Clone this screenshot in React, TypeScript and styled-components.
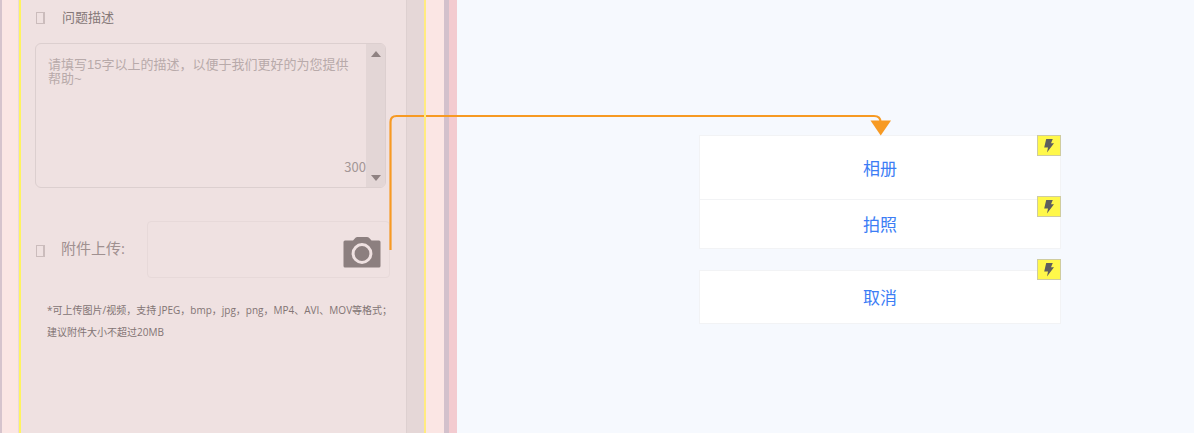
import React from "react";
import styled, { createGlobalStyle } from "styled-components";

const GlobalStyle = createGlobalStyle`
  *, *::before, *::after { box-sizing: border-box; }
  body {
    margin: 0;
    background: #f6f9fe;
    font-family: "Open Sans", "Noto Sans CJK SC", sans-serif;
  }
`;

const Page = styled.main`
  position: relative;
  display: flex;
  min-height: 100vh;
  overflow: hidden;
`;

const Backdrop = styled.section`
  flex: 0 0 457px;
  display: flex;
  border-right: 8px solid #f3cbd0;
`;

const Device = styled.div`
  flex: 1;
  display: flex;
  background: #fbe6e4;
  border-left: 2px solid #d6c4cd;
  border-right: 5px solid #d3c1cc;
  padding-left: 16px;
`;

const Screen = styled.div`
  flex: 0 0 408px;
  display: flex;
  background: #efe1e1;
  border-left: 1px solid #eadada;
`;

const Edge = styled.div<{ $color: string }>`
  position: relative;
  z-index: 2;
  flex: 0 0 2px;
  background: ${(p) => p.$color};
`;

const Form = styled.form`
  flex: 1;
  min-width: 0;
  display: flex;
  flex-direction: column;
  padding: 7px 14px 0;
`;

const PageScroll = styled.div`
  flex: 0 0 18px;
  background: #e5d7d7;
  border-left: 1px solid #ddd0d0;
`;

const TitleRow = styled.div`
  display: flex;
  align-items: center;
  height: 20px;
  gap: 17px;
  padding-left: 1px;
`;

const Missing = styled.span`
  width: 9px;
  height: 12px;
  margin-top: 2px;
  border: 1px solid #cbbcbc;
  border-width: 1px 2px 1px 1px;
`;

const Title = styled.label`
  font-size: 13px;
  line-height: 20px;
  color: #857878;
`;

const TextBox = styled.div`
  display: flex;
  width: 351px;
  height: 145px;
  margin-top: 16px;
  border: 1px solid #dccfcf;
  border-radius: 6px;
  overflow: hidden;
`;

const TextColumn = styled.div`
  flex: 1;
  display: flex;
  flex-direction: column;
  padding: 14px 0 10px 12px;
`;

const TextArea = styled.textarea`
  flex: 1;
  width: 100%;
  padding: 0 12px 0 0;
  border: 0;
  outline: 0;
  resize: none;
  overflow: hidden;
  background: transparent;
  color: #857878;
  font: 13px/14px "Liberation Sans", "Noto Sans CJK SC", sans-serif;
  &::placeholder { color: #b8aaaa; opacity: 1; }
`;

const Counter = styled.output`
  align-self: flex-end;
  font: 13px/20px "Noto Sans CJK SC", sans-serif;
  color: #a39696;
`;

const BoxScroll = styled.div`
  flex: 0 0 19px;
  display: flex;
  flex-direction: column;
  justify-content: space-between;
  align-items: center;
  padding: 7px 0 6px;
  background: #e3d6d6;
`;

const UploadRow = styled.div`
  display: flex;
  align-items: center;
  gap: 16px;
  height: 57px;
  margin-top: 33px;
  padding-left: 1px;
`;

const UploadLabel = styled.span`
  width: 70px;
  padding-bottom: 3px;
  font-size: 15px;
  line-height: 22px;
  color: #a09090;
`;

const UploadField = styled.div`
  flex: 0 0 243px;
  display: flex;
  align-items: center;
  justify-content: flex-end;
  height: 57px;
  padding-right: 8px;
  border: 1px solid #e7d9d9;
  border-radius: 4px;
`;

const CameraButton = styled.button`
  display: flex;
  padding: 6px 0 0;
  border: 0;
  background: none;
  cursor: pointer;
`;

const Hint = styled.p`
  margin: 21px 0 0 12px;
  font-size: 10px;
  line-height: 22px;
  color: #827474;
  white-space: nowrap;
`;

const Canvas = styled.section`
  flex: 1;
  padding: 135px 16px 0 242px;
`;

const Sheet = styled.div`
  display: flex;
  flex-direction: column;
  max-width: 362px;
`;

const Item = styled.div<{ $gap?: number }>`
  position: relative;
  display: flex;
  margin-top: ${(p) => p.$gap ?? 0}px;
`;

const Action = styled.button<{ $height: number }>`
  flex: 1;
  height: ${(p) => p.$height}px;
  padding: 2px 0 0;
  border: 1px solid #f2f3f5;
  background: #fff;
  color: #3c7df5;
  font: 17px/24px "Open Sans", "Noto Sans CJK SC", sans-serif;
  cursor: pointer;
`;

const Badge = styled.span<{ $top: number }>`
  position: absolute;
  top: ${(p) => p.$top}px;
  right: 0;
  display: flex;
  align-items: center;
  justify-content: center;
  width: 24px;
  height: 21px;
  border: 1px solid #cfcca0;
  background: #fff84a;
`;

const Connector = styled.svg`
  position: absolute;
  top: 0;
  left: 0;
  z-index: 1;
  pointer-events: none;
`;

const Arrow = ({ down = false }: { down?: boolean }) => (
  <svg width="10" height="6" viewBox="0 0 10 6" aria-hidden="true">
    <path d={down ? "M0 0h10L5 6z" : "M0 6h10L5 0z"} fill="#8f8282" />
  </svg>
);

const Camera = () => (
  <svg width="38" height="31" viewBox="0 0 38 31" aria-hidden="true">
    <path
      d="M2 3.500H10L12.500 .8Q13.200 0 14.500 0H24Q25.300 0 26 .8L28.500 3.500H36Q37.500 3.500 37.500 5V29Q37.500 30.500 36 30.500H2Q.5 30.500 .5 29V5Q.5 3.500 2 3.500z"
      fill="#8c7f7f"
    />
    <circle cx="19" cy="16.500" r="8.900" fill="none" stroke="#efe1e1" strokeWidth="3" />
  </svg>
);

const Bolt = () => (
  <svg width="10" height="14" viewBox="0 0 10 14" aria-hidden="true">
    <path d="M2.200 0H8.800L7 4.300H10L3 13.500L4 8.500H.2z" fill="#5e5e5e" />
  </svg>
);

const actions = [
  { label: "相册", height: 65, gap: 0, badge: 0 },
  { label: "拍照", height: 50, gap: -1, badge: -3 },
  { label: "取消", height: 54, gap: 21, badge: -11 },
];

export default function App() {
  return (
    <>
      <GlobalStyle />
      <Page>
        <Backdrop>
          <Device>
            <Screen>
              <Edge $color="#fff45f" />
              <Form>
                <TitleRow>
                  <Missing />
                  <Title htmlFor="description">问题描述</Title>
                </TitleRow>
                <TextBox>
                  <TextColumn>
                    <TextArea
                      id="description"
                      placeholder="请填写15字以上的描述，以便于我们更好的为您提供帮助~"
                    />
                    <Counter htmlFor="description">300</Counter>
                  </TextColumn>
                  <BoxScroll>
                    <Arrow />
                    <Arrow down />
                  </BoxScroll>
                </TextBox>
                <UploadRow>
                  <Missing />
                  <UploadLabel id="upload-label">附件上传:</UploadLabel>
                  <UploadField>
                    <CameraButton type="button" aria-labelledby="upload-label">
                      <Camera />
                    </CameraButton>
                  </UploadField>
                </UploadRow>
                <Hint>
                  *可上传图片/视频，支持 JPEG，bmp，jpg，png，MP4、AVI、MOV等格式；
                  <br />
                  建议附件大小不超过20MB
                </Hint>
              </Form>
              <PageScroll />
              <Edge $color="#ffeb80" />
            </Screen>
          </Device>
        </Backdrop>
        <Canvas>
          <Sheet>
            {actions.map((a) => (
              <Item key={a.label} $gap={a.gap}>
                <Action type="button" $height={a.height}>
                  {a.label}
                </Action>
                <Badge $top={a.badge}>
                  <Bolt />
                </Badge>
              </Item>
            ))}
          </Sheet>
        </Canvas>
        <Connector width="900" height="260" viewBox="0 0 900 260" aria-hidden="true">
          <path
            d="M390.500 250V122Q390.500 116 396.500 116H874Q880.500 116 880.500 122"
            fill="none"
            stroke="#f79a23"
            strokeWidth="2.200"
          />
          <path d="M870.500 120.500H891L880.700 135.500z" fill="#f79a23" />
        </Connector>
      </Page>
    </>
  );
}
